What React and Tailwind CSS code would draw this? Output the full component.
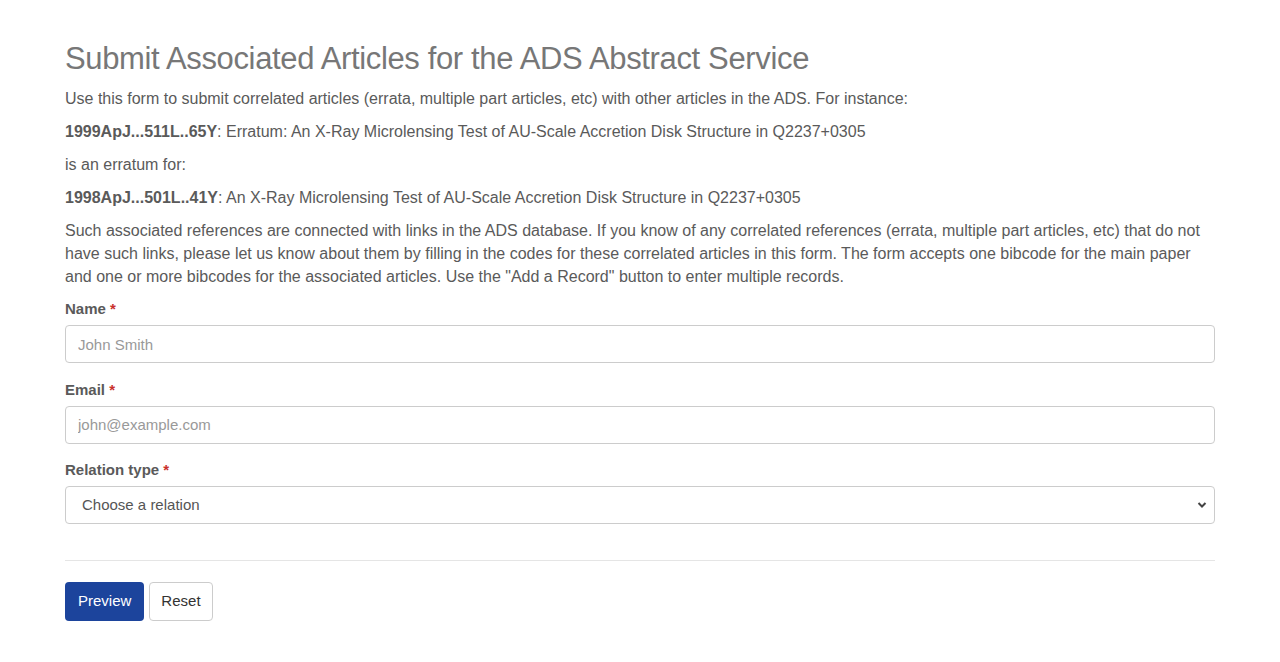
import React from 'react';

const Field = ({ label, children }) => (
    <div className="mb-[15.5px]">
        <label className="block font-bold text-[15px] leading-[22px] mb-[5px]">
            {label} <span className="text-[#c9302c]">*</span>
        </label>
        {children}
    </div>
);

const inputCls =
    'block w-full h-[38px] px-3 border border-[#cccccc] rounded-[4px] text-[15px] text-[#555] placeholder:text-[#999] bg-white outline-none';

const App = () => {
    return (
        <div className="min-h-screen bg-white text-[#5a5a5a] px-[65px] pt-[41px] pb-10" style={{ fontFamily: '"Liberation Sans", Arial, sans-serif' }}>
            <h1 className="text-[31px] leading-[36px] font-normal text-[#777] tracking-[-0.35px] mb-[10px]">
                Submit Associated Articles for the ADS Abstract Service
            </h1>
            <div className="text-[16px] leading-[23px]">
                <p className="mb-[10px]">Use this form to submit correlated articles (errata, multiple part articles, etc) with other articles in the ADS. For instance:</p>
                <p className="mb-[10px]"><b>1999ApJ...511L..65Y</b>: Erratum: An X-Ray Microlensing Test of AU-Scale Accretion Disk Structure in Q2237+0305</p>
                <p className="mb-[10px]">is an erratum for:</p>
                <p className="mb-[10px]"><b>1998ApJ...501L..41Y</b>: An X-Ray Microlensing Test of AU-Scale Accretion Disk Structure in Q2237+0305</p>
                <p className="mb-[10px]">
                    Such associated references are connected with links in the ADS database. If you know of any correlated references (errata, multiple part articles, etc) that do not have such links, please let us know about them by filling in the codes for these correlated articles in this form. The form accepts one bibcode for the main paper and one or more bibcodes for the associated articles. Use the "Add a Record" button to enter multiple records.
                </p>
            </div>

            <form onSubmit={e => e.preventDefault()}>
                <Field label="Name">
                    <input className={inputCls} placeholder="John Smith" />
                </Field>
                <Field label="Email">
                    <input className={inputCls} placeholder="john@example.com" />
                </Field>
                <Field label="Relation type">
                    <div className="relative">
                        <select className={`${inputCls} appearance-none pl-4 text-[#555]`} defaultValue="">
                            <option value="">Choose a relation</option>
                            <option value="errata">Errata</option>
                            <option value="addenda">Addenda</option>
                            <option value="series">Series of articles</option>
                        </select>
                        <svg className="absolute right-[8px] top-[15px] w-[10px] h-[8px] pointer-events-none" viewBox="0 0 10 8">
                            <path d="M1.5 2 L5 5.5 L8.5 2" fill="none" stroke="#444" strokeWidth="2" />
                        </svg>
                    </div>
                </Field>

                <hr className="border-0 border-t border-[#e5e5e5] mt-[36px] mb-[21px]" />

                <div className="flex gap-[5px]">
                    <button className="h-[39px] px-[13px] rounded-[4px] bg-[#1c449c] text-white text-[15px]">Preview</button>
                    <button type="reset" className="h-[39px] px-[11px] rounded-[4px] border border-[#cccccc] bg-white text-[#333] text-[15px]">Reset</button>
                </div>
            </form>
        </div>
    );
};

export default App;
